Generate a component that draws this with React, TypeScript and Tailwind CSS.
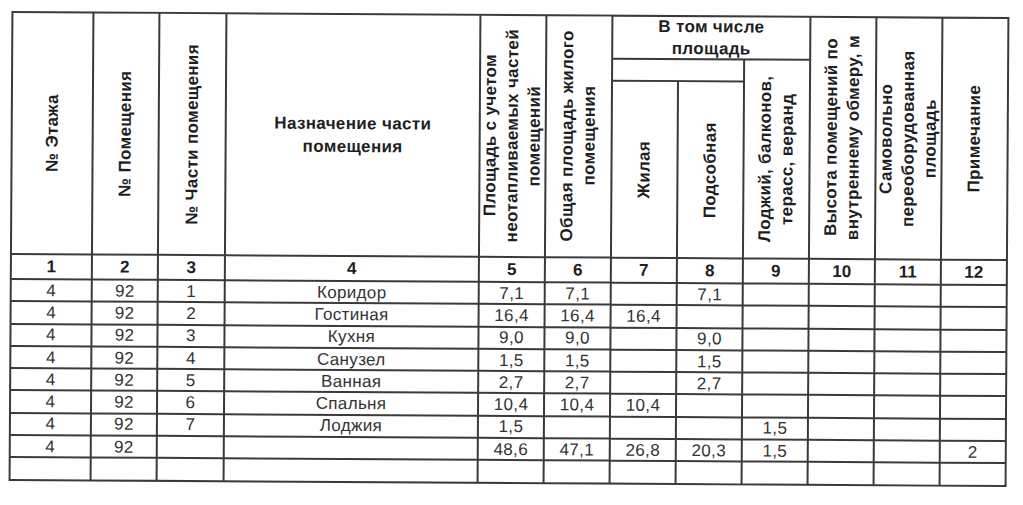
import React from 'react'

const rows: string[][] = [
  ['4', '92', '1', 'Коридор', '7,1', '7,1', '', '7,1', '', '', '', ''],
  ['4', '92', '2', 'Гостиная', '16,4', '16,4', '16,4', '', '', '', '', ''],
  ['4', '92', '3', 'Кухня', '9,0', '9,0', '', '9,0', '', '', '', ''],
  ['4', '92', '4', 'Санузел', '1,5', '1,5', '', '1,5', '', '', '', ''],
  ['4', '92', '5', 'Ванная', '2,7', '2,7', '', '2,7', '', '', '', ''],
  ['4', '92', '6', 'Спальня', '10,4', '10,4', '10,4', '', '', '', '', ''],
  ['4', '92', '7', 'Лоджия', '1,5', '', '', '', '1,5', '', '', ''],
  ['4', '92', '', '', '48,6', '47,1', '26,8', '20,3', '1,5', '', '', '2'],
  ['', '', '', '', '', '', '', '', '', '', '', ''],
]

const Vertical = ({ className, children }: { className: string; children: React.ReactNode }) => (
  <div className={`flex items-center justify-center bg-white ${className}`}>
    <div className="rotate-180 text-center leading-[22px] [text-orientation:sideways] [writing-mode:vertical-rl]">
      {children}
    </div>
  </div>
)

export default function App() {
  return (
    <div className="min-h-[505px] w-[1023px] bg-white pl-[10px] pt-[14px] font-['Liberation_Sans',Arial,sans-serif] text-[#222]">
      <div className="grid w-fit rotate-[0.35deg] grid-cols-[79px_64px_65px_252px_repeat(8,64px)] grid-rows-[41px_20px_175px_23px_repeat(9,20.3px)] gap-[2px] bg-[#3a3a3a] p-[2px]">
        {/* header */}
        <div className="contents text-[17px] font-bold tracking-[0.02em] text-[#1f1f1f]">
          <Vertical className="col-start-1 row-span-3 row-start-1">№ Этажа</Vertical>
          <Vertical className="col-start-2 row-span-3 row-start-1">№ Помещения</Vertical>
          <Vertical className="col-start-3 row-span-3 row-start-1">№ Части помещения</Vertical>
          <div className="col-start-4 row-span-3 row-start-1 flex items-center justify-center bg-white text-center leading-[23px]">
            Назначение части
            <br />
            помещения
          </div>
          <Vertical className="col-start-5 row-span-3 row-start-1">
            Площадь с учетом
            <br />
            неотапливаемых частей
            <br />
            помещений
          </Vertical>
          <Vertical className="col-start-6 row-span-3 row-start-1">
            Общая площадь жилого
            <br />
            помещения
          </Vertical>
          <div className="col-span-3 col-start-7 row-start-1 flex items-center justify-center bg-white text-center leading-[22px]">
            В том числе
            <br />
            площадь
          </div>
          <div className="col-span-2 col-start-7 row-start-2 bg-white" />
          <Vertical className="col-start-9 row-span-2 row-start-2">
            Лоджий, балконов,
            <br />
            терасс, веранд
          </Vertical>
          <Vertical className="col-start-7 row-start-3">Жилая</Vertical>
          <Vertical className="col-start-8 row-start-3">Подсобная</Vertical>
          <Vertical className="col-start-10 row-span-3 row-start-1">
            Высота помещений по
            <br />
            внутреннему обмеру, м
          </Vertical>
          <Vertical className="col-start-11 row-span-3 row-start-1">
            Самовольно
            <br />
            переоборудованная
            <br />
            площадь
          </Vertical>
          <Vertical className="col-start-12 row-span-3 row-start-1">Примечание</Vertical>
        </div>

        {/* column numbers */}
        {Array.from({ length: 12 }, (_, i) => (
          <div
            key={i}
            className="flex items-center justify-center bg-white text-[17px] font-bold leading-none text-[#1f1f1f]"
          >
            {i + 1}
          </div>
        ))}

        {/* data rows */}
        {rows.map((row, r) =>
          row.map((cell, c) => (
            <div
              key={`${r}-${c}`}
              className="flex items-center justify-center bg-white text-[17px] leading-none tracking-[0.02em] text-[#333]"
            >
              {cell}
            </div>
          )),
        )}
      </div>
    </div>
  )
}
